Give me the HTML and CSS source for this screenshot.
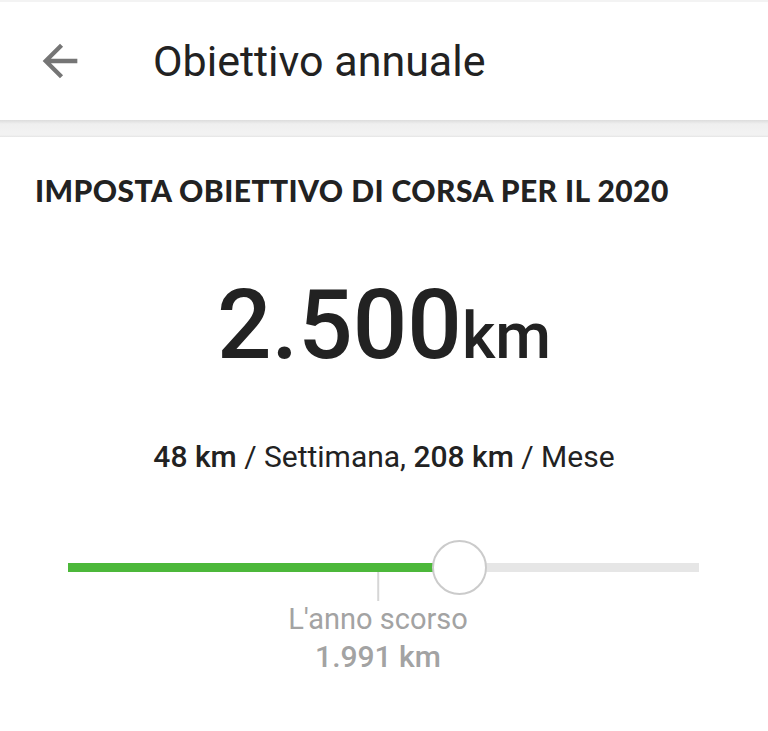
FILE: index.html
```html
<!DOCTYPE html>
<html>
    <head>
        <meta charset="utf-8" />
        <title>Obiettivo annuale</title>
        <link rel="stylesheet" href="styles.css">
    </head>
    <body>
        <header class="app-bar">
            <svg class="back-icon" viewBox="0 0 24 24" width="52" height="52">
                <path d="M20 11H7.83l5.59-5.59L12 4l-8 8 8 8 1.41-1.41L7.83 13H20v-2z" fill="#757575" />
            </svg>
            <h1 class="app-title">Obiettivo annuale</h1>
        </header>
        <div class="divider"></div>

        <main class="goal">
            <h2 class="goal-heading">IMPOSTA OBIETTIVO DI CORSA PER IL 2020</h2>

            <div class="goal-value">
                <span class="value-number">2.500</span><span class="value-unit">km</span>
            </div>

            <p class="goal-breakdown"><b>48 km</b> / Settimana, <b>208 km</b> / Mese</p>

            <div class="slider">
                <div class="slider-track">
                    <div class="slider-fill" style="width: 365px"></div>
                    <div class="slider-marker" style="left: 310px">
                        <div class="marker-tick"></div>
                        <div class="marker-label">L'anno scorso</div>
                        <div class="marker-value">1.991 km</div>
                    </div>
                    <div class="slider-thumb" style="left: 364px"></div>
                </div>
            </div>
        </main>
    </body>
</html>
```

FILE: styles.css
```css
* {
    box-sizing: border-box;
    margin: 0;
    padding: 0;
}

body {
    font-family: Roboto, "Liberation Sans", sans-serif;
    background-color: #fff;
    color: #222;
}

.app-bar {
    display: flex;
    align-items: center;
    height: 120px;
    padding-left: 34px;
    border-top: 2px solid #f3f3f3;
}

.back-icon {
    flex-shrink: 0;
}

.app-title {
    font-size: 43px;
    font-weight: 400;
    margin-left: 67px;
    color: #222;
}

.divider {
    height: 17px;
    background: linear-gradient(#dcdcdc, #efefef 4px, #f2f2f2 12px, #f2f2f2 15px, #e4e4e4);
}

.goal {
    padding: 38px 35px 0;
}

.goal-heading {
    font-family: Lato, sans-serif;
    font-weight: 900;
    font-size: 30px;
    line-height: 30px;
    letter-spacing: 0.45px;
    color: #222;
}

.goal-value {
    display: flex;
    justify-content: center;
    align-items: baseline;
    margin-top: 72px;
    line-height: 1;
    font-weight: 500;
}

.value-number {
    font-size: 96px;
}

.value-unit {
    font-size: 64px;
}

.goal-breakdown {
    text-align: center;
    font-size: 30px;
    margin-top: 66px;
    color: #222;
}

.goal-breakdown b {
    font-weight: 500;
}

.slider {
    margin-top: 89px;
    padding-left: 33px;
    padding-right: 34px;
    height: 130px;
}

.slider-track {
    position: relative;
    height: 9px;
    background-color: #e6e6e6;
}

.slider-fill {
    height: 100%;
    background-color: #4cb83a;
}

.slider-thumb {
    position: absolute;
    top: -23px;
    width: 55px;
    height: 55px;
    border: 2px solid #cbcbcb;
    border-radius: 50%;
    background-color: #fff;
}

.slider-marker {
    position: absolute;
    top: 9px;
    display: flex;
    flex-direction: column;
    align-items: center;
    transform: translateX(-50%);
    white-space: nowrap;
    color: #a3a3a3;
}

.marker-tick {
    width: 2px;
    height: 29px;
    background-color: #d6d6d6;
}

.marker-label {
    font-size: 29px;
    line-height: 36px;
}

.marker-value {
    font-size: 30px;
    font-weight: 500;
    line-height: 40px;
}
```
